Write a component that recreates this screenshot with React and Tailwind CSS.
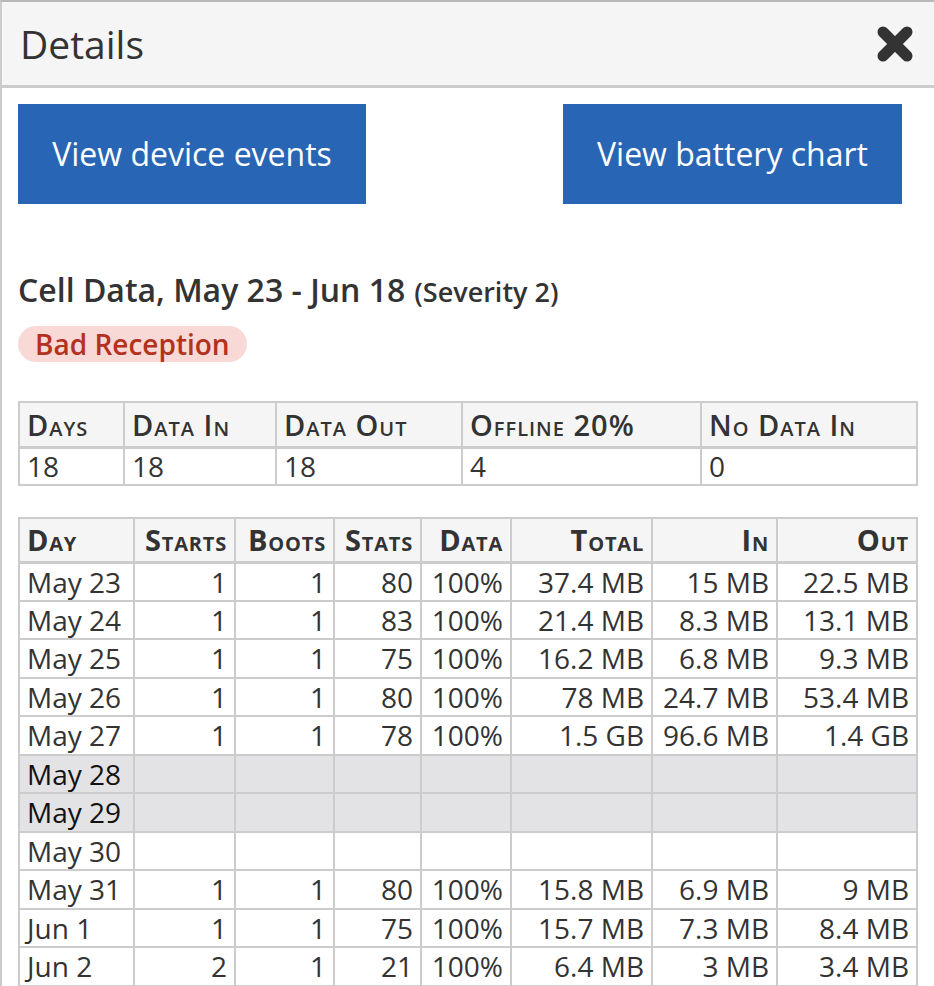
import React from 'react';

const font = { fontFamily: '"Open Sans", "Noto Sans", sans-serif' };

const summary = [
  { label: 'Days', value: '18', w: 'w-[105px]' },
  { label: 'Data In', value: '18', w: 'w-[152px]' },
  { label: 'Data Out', value: '18', w: 'w-[186px]' },
  { label: 'Offline 20%', value: '4', w: 'w-[239px]' },
  { label: 'No Data In', value: '0', w: '' },
];

const cols = [
  { label: 'Day', w: 'w-[115px]', left: true },
  { label: 'Starts', w: 'w-[101px]' },
  { label: 'Boots', w: 'w-[99px]' },
  { label: 'Stats', w: 'w-[87px]' },
  { label: 'Data', w: 'w-[90px]' },
  { label: 'Total', w: 'w-[141px]' },
  { label: 'In', w: 'w-[125px]' },
  { label: 'Out', w: '' },
];

const rows = [
  ['May 23', '1', '1', '80', '100%', '37.4 MB', '15 MB', '22.5 MB'],
  ['May 24', '1', '1', '83', '100%', '21.4 MB', '8.3 MB', '13.1 MB'],
  ['May 25', '1', '1', '75', '100%', '16.2 MB', '6.8 MB', '9.3 MB'],
  ['May 26', '1', '1', '80', '100%', '78 MB', '24.7 MB', '53.4 MB'],
  ['May 27', '1', '1', '78', '100%', '1.5 GB', '96.6 MB', '1.4 GB'],
  ['May 28', '', '', '', '', '', '', '', 'gray'],
  ['May 29', '', '', '', '', '', '', '', 'gray'],
  ['May 30', '', '', '', '', '', '', ''],
  ['May 31', '1', '1', '80', '100%', '15.8 MB', '6.9 MB', '9 MB'],
  ['Jun 1', '1', '1', '75', '100%', '15.7 MB', '7.3 MB', '8.4 MB'],
  ['Jun 2', '2', '1', '21', '100%', '6.4 MB', '3 MB', '3.4 MB'],
];

const CloseIcon = () => (
  <svg width="38" height="38" viewBox="0 0 38 38">
    <path d="M7 7 L31 31 M31 7 L7 31" stroke="#333333" strokeWidth="11" strokeLinecap="round" fill="none" />
  </svg>
);

const App = () => {
  return (
    <div style={font} className="w-[936px] h-[986px] overflow-hidden bg-white border-l-2 border-t-2 border-l-[#cccccc] border-t-[#b8b8b8] text-[#333333]">
      <div className="h-[86px] flex items-center justify-between bg-[#f5f5f5] border-b-[3px] border-[#cccccc] pl-[18px] pr-[22px]">
        <h1 className="text-[39px] leading-none">Details</h1>
        <CloseIcon />
      </div>

      <div className="pl-4 pr-[18px] pt-4">
        <div className="flex justify-between pr-4">
          <button className="h-[100px] w-[348px] bg-[#2866b5] text-white text-[32px]">View device events</button>
          <button className="h-[100px] w-[339px] bg-[#2866b5] text-white text-[32px]">View battery chart</button>
        </div>

        <div className="mt-[70px] flex items-baseline gap-[9px] leading-none">
          <span className="text-[32px] font-semibold">Cell Data, May 23 - Jun 18</span>
          <span className="text-[27px] font-semibold">(Severity 2)</span>
        </div>
        <div className="mt-[20px]">
          <span className="inline-flex items-center h-[36px] px-[17px] rounded-full bg-[#f8d9d5] text-[#b3321e] text-[28px] font-semibold leading-none">Bad Reception</span>
        </div>

        <table className="mt-[39px] w-[900px] border-collapse text-[28px]">
          <thead>
            <tr className="bg-[#f5f5f5] h-[45px]">
              {summary.map((c) => (
                <th key={c.label} className={`${c.w} border-2 border-b-[3px] border-[#cccccc] px-[7px] text-left text-[29px] tracking-[1px] font-semibold [font-variant:small-caps] leading-none`}>{c.label}</th>
              ))}
            </tr>
          </thead>
          <tbody>
            <tr className="h-[38px]">
              {summary.map((c) => (
                <td key={c.label} className="border-2 border-[#cccccc] px-[7px] leading-none">{c.value}</td>
              ))}
            </tr>
          </tbody>
        </table>

        <table className="mt-[31px] w-[900px] border-collapse text-[28px]">
          <thead>
            <tr className="bg-[#f5f5f5] h-[44px]">
              {cols.map((c) => (
                <th key={c.label} className={`${c.w} ${c.left ? 'text-left' : 'text-right'} border-2 border-b-[3px] border-[#cccccc] px-[7px] text-[29px] tracking-[0.8px] font-bold [font-variant:small-caps] leading-none`}>{c.label}</th>
              ))}
            </tr>
          </thead>
          <tbody>
            {rows.map((r) => (
              <tr key={r[0]} className={`h-[38.5px] ${r[8] === 'gray' ? 'bg-[#e3e3e5] text-[#111111]' : ''}`}>
                {r.slice(0, 8).map((v, i) => (
                  <td key={i} className={`${i === 0 ? 'text-left' : 'text-right'} border-2 border-[#cccccc] px-[7px] leading-none whitespace-nowrap`}>{v}</td>
                ))}
              </tr>
            ))}
          </tbody>
        </table>
      </div>
    </div>
  );
};

export default App;
